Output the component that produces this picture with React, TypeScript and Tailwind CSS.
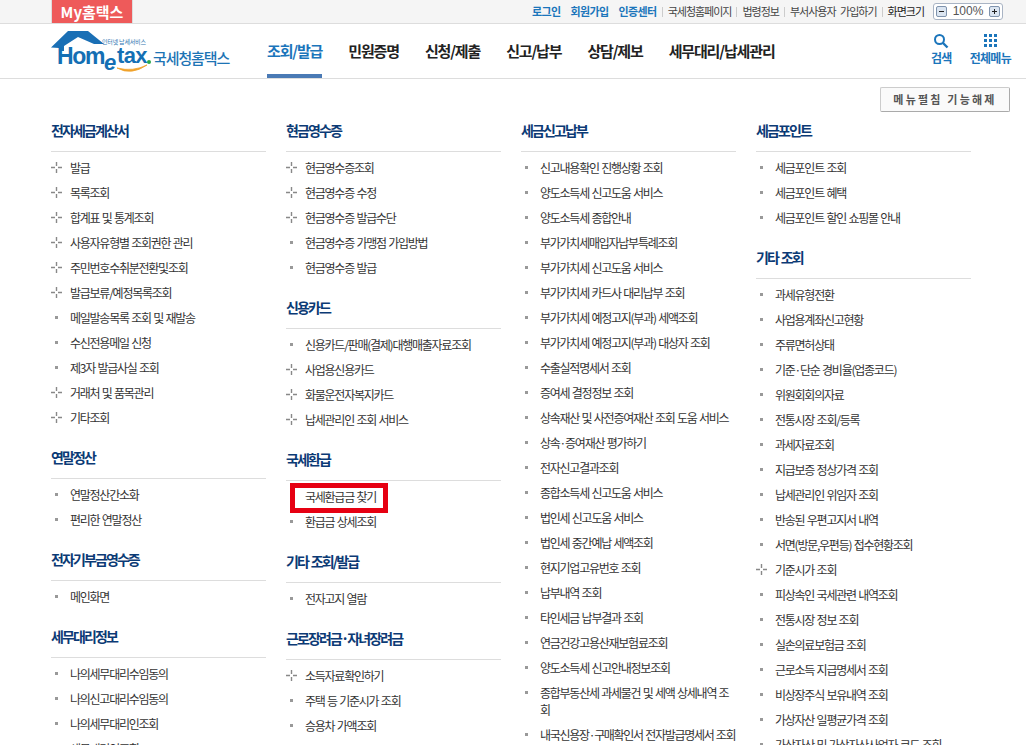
import React from "react";

type Item = string | [string, 1] | [string, 2];
type Section = { title: string; items: Item[] };

const font = { fontFamily: '"Noto Sans CJK KR","Noto Sans",sans-serif' };
const latin = { fontFamily: '"Liberation Sans",sans-serif' };

const P = (s: string): Item => [s, 1];
const R = (s: string): Item => [s, 2];

const columns: Section[][] = [
  [
    { title: "전자세금계산서", items: [P("발급"), P("목록조회"), P("합계표 및 통계조회"), P("사용자유형별 조회권한 관리"), P("주민번호수취분전환및조회"), P("발급보류/예정목록조회"), "메일발송목록 조회 및 재발송", "수신전용메일 신청", "제3자 발급사실 조회", P("거래처 및 품목관리"), P("기타조회")] },
    { title: "연말정산", items: ["연말정산간소화", "편리한 연말정산"] },
    { title: "전자기부금영수증", items: ["메인화면"] },
    { title: "세무대리정보", items: ["나의세무대리수임동의", "나의신고대리수임동의", "나의세무대리인조회", "세무대리인조회"] },
  ],
  [
    { title: "현금영수증", items: [P("현금영수증조회"), P("현금영수증 수정"), P("현금영수증 발급수단"), "현금영수증 가맹점 가입방법", "현금영수증 발급"] },
    { title: "신용카드", items: ["신용카드/판매(결제)대행매출자료조회", P("사업용신용카드"), P("화물운전자복지카드"), P("납세관리인 조회 서비스")] },
    { title: "국세환급", items: [R("국세환급금 찾기"), "환급금 상세조회"] },
    { title: "기타 조회/발급", items: ["전자고지 열람"] },
    { title: "근로장려금·자녀장려금", items: [P("소득자료확인하기"), "주택 등 기준시가 조회", "승용차 가액조회"] },
  ],
  [
    { title: "세금신고납부", items: ["신고내용확인 진행상황 조회", "양도소득세 신고도움 서비스", "양도소득세 종합안내", "부가가치세매입자납부특례조회", "부가가치세 신고도움 서비스", "부가가치세 카드사 대리납부 조회", "부가가치세 예정고지(부과) 세액조회", "부가가치세 예정고지(부과) 대상자 조회", "수출실적명세서 조회", "증여세 결정정보 조회", "상속재산 및 사전증여재산 조회 도움 서비스", "상속·증여재산 평가하기", "전자신고결과조회", "종합소득세 신고도움 서비스", "법인세 신고도움 서비스", "법인세 중간예납 세액조회", "현지기업고유번호 조회", "납부내역 조회", "타인세금 납부결과 조회", "연금건강고용산재보험료조회", "양도소득세 신고안내정보조회", "종합부동산세 과세물건 및 세액 상세내역 조회", "내국신용장·구매확인서 전자발급명세서 조회"] },
  ],
  [
    { title: "세금포인트", items: ["세금포인트 조회", "세금포인트 혜택", "세금포인트 할인 쇼핑몰 안내"] },
    { title: "기타 조회", items: ["과세유형전환", "사업용계좌신고현황", "주류면허상태", "기준·단순 경비율(업종코드)", "위원회회의자료", "전통시장 조회/등록", "과세자료조회", "지급보증 정상가격 조회", "납세관리인 위임자 조회", "반송된 우편고지서 내역", "서면(방문,우편등) 접수현황조회", P("기준시가 조회"), "피상속인 국세관련 내역조회", "전통시장 정보 조회", "실손의료보험금 조회", "근로소득 지급명세서 조회", "비상장주식 보유내역 조회", "가상자산 일평균가격 조회", "가상자산 및 가상자산사업자 코드 조회"] },
  ],
];

function Plus() {
  return (
    <svg width="11" height="11" viewBox="0 0 11 11" className="shrink-0">
      <path d="M5.5 0v4M5.5 7v4M0 5.5h4M7 5.5h4" stroke="#888" strokeWidth="1.4" />
    </svg>
  );
}

function Row({ item }: { item: Item }) {
  const text = typeof item === "string" ? item : item[0];
  const kind = typeof item === "string" ? 0 : item[1];
  const noWrap = text.startsWith("내국신용장");
  return (
    <li className={noWrap ? "relative pl-[19px] py-[4px] text-[12px] leading-[17px] tracking-[-1.3px] [word-spacing:1px] text-[#333] whitespace-nowrap" : "relative pl-[19px] py-[4px] text-[12px] leading-[17px] tracking-[-1.25px] [word-spacing:1px] text-[#333]"}>
      <span className="absolute left-0 top-[7px] flex w-[11px] h-[11px] items-center justify-center">
        {kind === 1 ? <Plus /> : <span className="block w-[3px] h-[3px] bg-[#999]" />}
      </span>
      {text}
      {kind === 2 && <span className="absolute left-[4px] top-[-1px] w-[98px] h-[30px] border-[5px] border-[#e60012]" />}
    </li>
  );
}

function Logo() {
  return (
    <div className="relative w-[185px] h-[47px] shrink-0" style={font}>
      <svg width="110" height="46" viewBox="0 0 110 46" className="absolute left-0 top-0">
        <path d="M0 16.5 L17 0 H37 L53 13 H43 L27 6 L13 15 V20 H8 V17 Z" fill="#1a6fb5" />
        <path d="M66 37 Q80 45 96 34 Q82 41 66 37 Z" fill="#f0a22b" stroke="#f0a22b" strokeWidth="0.8" />
        <circle cx="98" cy="31" r="2" fill="#2aa84a" />
      </svg>
      <span className="absolute left-[6px] top-[15px] text-[23px] leading-[20px] font-bold tracking-[-1.3px] text-[#146fb4]" style={latin}>Hom</span>
      <span className="absolute left-[53px] top-[23px] text-[22px] leading-[18px] font-bold italic text-[#146fb4]" style={latin}>e</span>
      <span className="absolute left-[66px] top-[16px] text-[22px] leading-[18px] font-bold tracking-[-0.7px] text-[#146fb4]" style={latin}>tax</span>
      <span className="absolute left-[51px] top-[6px] text-[6px] leading-[9px] tracking-[-0.2px] text-[#3276b1] whitespace-nowrap">인터넷 납세서비스</span>
      <span className="absolute left-[102px] top-[16px] text-[15px] leading-[22px] font-medium tracking-[-1.1px] text-[#1d74b5] whitespace-nowrap">국세청홈택스</span>
    </div>
  );
}

const Sep = () => <span className="w-px h-[10px] bg-[#ccc]" />;

export default function App() {
  return (
    <div className="w-[1026px] h-[745px] overflow-hidden bg-white" style={font}>
      <header className="h-[24px] bg-[#f5f5f5] border-b border-[#ddd] flex items-start pl-[51px] pr-[23px]">
        <div className="w-[82px] h-[23px] bg-[#ee5a5a] border-x border-[#ddd] text-white text-[15px] leading-[23px] font-bold text-center">My홈택스</div>
        <div className="ml-auto h-[23px] flex items-center gap-[5px] text-[11px] tracking-[-1px] [word-spacing:3px] text-[#444] whitespace-nowrap">
          <span className="font-bold tracking-[-0.6px] text-[#1b75bb]">로그인</span>
          <span className="ml-[5px] font-bold tracking-[-0.6px] text-[#1b75bb]">회원가입</span>
          <span className="ml-[5px] font-bold tracking-[-0.6px] text-[#1b75bb]">인증센터</span>
          <Sep /><span>국세청홈페이지</span>
          <Sep /><span>법령정보</span>
          <Sep /><span>부서사용자 가입하기</span>
          <Sep /><span className="text-[#222]">화면크기</span>
          <div className="ml-[4px] w-[70px] h-[17px] flex items-center justify-between px-[2px] border border-[#a9b4c4] rounded-[3px] bg-white text-[#555] text-[12px]">
            <span className="w-[11px] h-[11px] border border-[#7f93ad] bg-[#dbe5f1] rounded-[2px] flex items-center justify-center"><span className="w-[5px] h-px bg-[#222]" /></span>
            <span className="tracking-normal leading-[12px] mb-[2px]" style={latin}>100%</span>
            <span className="relative w-[11px] h-[11px] border border-[#7f93ad] bg-[#dbe5f1] rounded-[2px] flex items-center justify-center"><span className="w-[5px] h-px bg-[#222]" /><span className="absolute w-px h-[5px] bg-[#222]" /></span>
          </div>
        </div>
      </header>

      <nav className="h-[55px] border-b border-[#ddd] flex items-start pl-[51px]">
        <div className="pt-[7px]"><Logo /></div>
        <ul className="ml-[31px] flex gap-[26px] text-[15px] font-bold tracking-[-1.15px] text-[#222] whitespace-nowrap">
          <li className="h-[54px] pt-[15px] leading-[24px] border-b-[4px] border-[#4a7ab5] text-[#1b75bb]">조회/발급</li>
          <li className="pt-[15px] leading-[24px]">민원증명</li>
          <li className="pt-[15px] leading-[24px]">신청/제출</li>
          <li className="pt-[15px] leading-[24px]">신고/납부</li>
          <li className="pt-[15px] leading-[24px]">상담/제보</li>
          <li className="pt-[15px] leading-[24px]">세무대리/납세관리</li>
        </ul>
        <div className="ml-auto mr-[15px] flex gap-[18px] text-[12px] font-bold tracking-[-0.7px] text-[#1b75bb] pt-[9px]">
          <div className="flex flex-col items-center">
            <svg width="16" height="16" viewBox="0 0 16 16"><circle cx="6.5" cy="6.5" r="4.5" fill="none" stroke="#1b75bb" strokeWidth="2" /><path d="M10 10l4.5 4.5" stroke="#1b75bb" strokeWidth="2.4" /></svg>
            <span className="leading-[16px] mt-[1px]">검색</span>
          </div>
          <div className="flex flex-col items-center">
            <div className="grid grid-cols-3 gap-[2px] w-[13px] h-[13px] mt-[1px] mb-[2px]">
              {Array.from({ length: 9 }).map((_, i) => <span key={i} className="w-[3px] h-[3px] bg-[#1b75bb]" />)}
            </div>
            <span className="leading-[16px] mt-[1px]">전체메뉴</span>
          </div>
        </div>
      </nav>

      <div className="flex justify-end pr-[16px] pt-[8px]">
        <div className="w-[130px] h-[25px] border border-[#ccc] border-b-[#aaa] border-r-[#aaa] rounded-[2px] bg-[#fafafa] flex items-center justify-center text-[11px] font-bold tracking-[2.2px] text-[#555]">메뉴펼침 기능해제</div>
      </div>

      <main className="pl-[51px] pt-[4px] grid grid-cols-[215px_215px_215px_215px] gap-x-[20px] items-start">
        {columns.map((sections, i) => (
          <div key={i} className="flex flex-col gap-[13px]">
            {sections.map((s) => (
              <section key={s.title}>
                <h3 className="h-[36px] pt-[3px] border-b border-[#ddd] text-[14px] leading-[22px] font-bold tracking-[-1.9px] [word-spacing:1.5px] text-[#0b3a75]">{s.title}</h3>
                <ul className="mt-[3px]">
                  {s.items.map((it, j) => <Row key={j} item={it} />)}
                </ul>
              </section>
            ))}
          </div>
        ))}
      </main>
    </div>
  );
}
